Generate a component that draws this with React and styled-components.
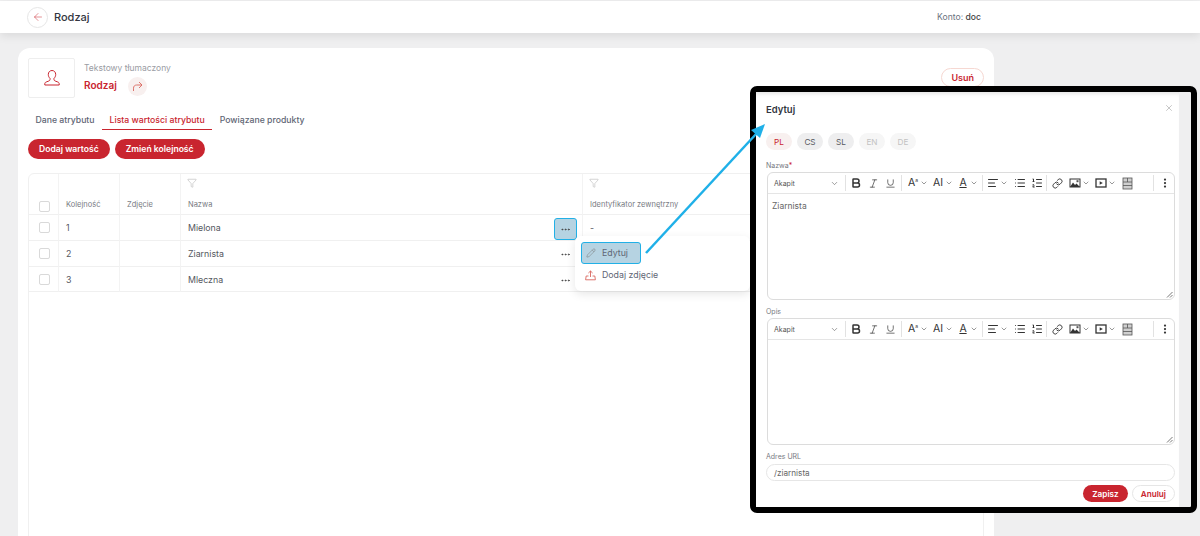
import React from "react";
import styled, { createGlobalStyle } from "styled-components";
import {
  AlignLeft,
  ArrowLeft,
  Bold,
  ChevronDown,
  Filter,
  Italic,
  Link,
  List,
  ListOrdered,
  MoreHorizontal,
  MoreVertical,
  Pencil,
  Underline,
  X,
} from "lucide-react";

const RED = "#c9252f";

const GlobalStyle = createGlobalStyle`
  html, body {
    margin: 0;
    padding: 0;
    background: #efeff0;
    font-family: Inter, "Liberation Sans", sans-serif;
  }
`;

const Page = styled.div`
  position: relative;
  width: 1200px;
  height: 536px;
  overflow: hidden;
  background: #efeff0;
`;

const TopBar = styled.header`
  height: 32px;
  margin-top: 1px;
  padding: 0 219px 0 27px;
  display: flex;
  align-items: center;
  background: #fff;
  box-shadow: 0 3px 10px rgba(0, 0, 0, 0.09);
`;

const BackButton = styled.div`
  width: 19px;
  height: 19px;
  margin-right: 6px;
  display: flex;
  align-items: center;
  justify-content: center;
  border: 1px solid #e6e6e6;
  border-radius: 50%;
  color: ${RED};
`;

const PageTitle = styled.h1`
  flex: 1;
  margin: 0;
  font-size: 11px;
  font-weight: 500;
  color: #33363f;
`;

const Account = styled.div`
  font-size: 8.6px;
  color: #6b7280;

  b {
    font-weight: 500;
    color: #444;
  }
`;

const Card = styled.main`
  width: 956px;
  height: 560px;
  margin: 15px 0 0 18px;
  padding: 10px;
  background: #fff;
  border-radius: 12px;
`;

const CardHead = styled.div`
  display: flex;
  align-items: flex-start;
`;

const Avatar = styled.div`
  width: 45px;
  height: 38px;
  margin-right: 9px;
  display: flex;
  align-items: center;
  justify-content: center;
  border: 1px solid #eee;
  border-radius: 2px;
`;

const HeadText = styled.div`
  flex: 1;
  padding-top: 5px;
`;

const AttrType = styled.div`
  font-size: 8.5px;
  line-height: 11px;
  color: #9a9ca3;
`;

const AttrNameRow = styled.div`
  margin-top: 3px;
  display: flex;
  align-items: center;
`;

const AttrName = styled.div`
  font-size: 10px;
  font-weight: 600;
  margin-top: -3px;
  color: ${RED};
`;

const ShareCircle = styled.div`
  width: 19px;
  height: 19px;
  margin-left: 11px;
  display: flex;
  align-items: center;
  justify-content: center;
  border-radius: 50%;
  background: #f8f0ef;
`;

const OutlineRedButton = styled.button`
  height: 19px;
  margin-top: 10px;
  padding: 0 9px;
  border: 1px solid ${(props) => props.$border};
  border-radius: 10px;
  background: #fff;
  color: ${RED};
  font: 600 9px Inter, "Liberation Sans", sans-serif;
`;

const Tabs = styled.nav`
  margin-top: 12px;
  display: flex;
`;

const Tab = styled.div`
  height: 19px;
  padding: 0 7.5px;
  display: flex;
  align-items: center;
  font-size: 8.7px;
  font-weight: 500;
  color: ${(props) => (props.$active ? RED : "#5f6675")};
  border-bottom: 1px solid ${(props) => (props.$active ? RED : "transparent")};
`;

const Actions = styled.div`
  margin-top: 9px;
  display: flex;
  gap: 5px;
`;

const RedButton = styled.button`
  height: 20px;
  padding: 0 11px;
  border: 0;
  border-radius: 10px;
  background: ${RED};
  color: #fff;
  font: 600 8.6px Inter, "Liberation Sans", sans-serif;
`;

const TableBox = styled.div`
  position: relative;
  height: 420px;
  margin-top: 14px;
  border: 1px solid #f0f0f0;
  border-radius: 6px;
`;

const Grid = styled.div`
  display: grid;
  grid-template-columns: 30px 61px 61px 402px 1fr;
  grid-template-rows: 41px 26px 26px 25px;
`;

const Cell = styled.div`
  position: relative;
  display: flex;
  align-items: center;
  padding-left: 7px;
  border-right: 1px solid #f3f3f3;
  border-bottom: 1px solid #f0f0f0;
  font-size: 8.8px;
  color: #555860;
`;

const HeadCell = styled(Cell)`
  flex-direction: column;
  align-items: flex-start;
  justify-content: flex-end;
  padding-bottom: 5px;
  font-size: 7.5px;
  color: #777a82;
`;

const CheckCell = styled(Cell)`
  padding-left: 10px;
  padding-bottom: ${(props) => (props.$head ? "2px" : "0")};
  align-items: ${(props) => (props.$head ? "flex-end" : "center")};
`;

const Checkbox = styled.div`
  width: 9px;
  height: 9px;
  border: 1px solid #d9d9d9;
  border-radius: 2px;
`;

const FilterSlot = styled.div`
  position: absolute;
  top: 4px;
  left: 6px;
  color: #999;
  line-height: 0;
`;

const RowAction = styled.div`
  position: absolute;
  top: ${(props) => (props.$active ? "3px" : "4px")};
  right: 5px;
  width: ${(props) => (props.$active ? "21px" : "23px")};
  height: ${(props) => (props.$active ? "20px" : "18px")};
  display: flex;
  align-items: center;
  justify-content: center;
  color: #444;
  background: ${(props) => (props.$active ? "#b6d3e2" : "transparent")};
  border: ${(props) => (props.$active ? "1px solid #22b0e6" : "0")};
  border-radius: 3px;
`;

const Menu = styled.div`
  position: absolute;
  top: 62px;
  left: 546px;
  width: 175px;
  height: 55px;
  box-sizing: border-box;
  padding: 6px;
  background: #fff;
  border-radius: 6px;
  box-shadow: 0 3px 10px rgba(0, 0, 0, 0.1);
`;

const MenuItem = styled.div`
  width: 60px;
  height: 22px;
  box-sizing: border-box;
  padding-left: 4px;
  display: flex;
  align-items: center;
  gap: 6px;
  white-space: nowrap;
  font-size: 8.8px;
  line-height: 10px;
  color: #5f6675;
  background: ${(props) => (props.$active ? "#b6d3e2" : "transparent")};
  border: ${(props) => (props.$active ? "1px solid #22b0e6" : "0")};
  border-radius: 3px;

  svg {
    flex-shrink: 0;
  }
`;

const Modal = styled.section`
  position: absolute;
  top: 86px;
  left: 750px;
  width: 435px;
  height: 415px;
  display: flex;
  background: #efeff0;
  border: 6px solid #000;
  border-radius: 7px;
`;

const ModalPanel = styled.div`
  width: 423px;
  box-sizing: border-box;
  padding: 11px 4px 0 10px;
  background: #fff;
  box-shadow: inset 0 5px 5px -4px rgba(0, 0, 0, 0.14);
`;

const ModalHead = styled.div`
  display: flex;
  justify-content: space-between;
  align-items: flex-start;
  color: #777;
`;

const ModalTitle = styled.h2`
  margin: 1px 0 0;
  font-size: 9.5px;
  line-height: 12px;
  font-weight: 600;
  color: #33363f;
`;

const CloseSlot = styled.div`
  margin-right: 1px;
  line-height: 0;
`;

const Langs = styled.div`
  margin-top: 17px;
  display: flex;
  gap: 5px;
`;

const Lang = styled.div`
  width: 26px;
  height: 17px;
  display: flex;
  align-items: center;
  justify-content: center;
  border-radius: 9px;
  font-size: 8.2px;
  background: ${(props) =>
    props.$state === "active" ? "#f8f0ef" : props.$state === "off" ? "#f6f6f6" : "#eeeeef"};
  color: ${(props) =>
    props.$state === "active" ? RED : props.$state === "off" ? "#c2c2c2" : "#555860"};
`;

const FieldLabel = styled.div`
  margin-top: ${(props) => props.$top}px;
  font-size: 7px;
  line-height: 9px;
  color: #777a82;

  i {
    font-style: normal;
    color: ${RED};
  }
`;

const Editor = styled.div`
  position: relative;
  width: 406px;
  height: ${(props) => props.$height}px;
  margin: 2px 0 0 1px;
  border: 1px solid #dcdcdc;
  border-radius: 6px;
`;

const EditorBar = styled.div`
  height: 20px;
  display: flex;
  align-items: center;
  border-bottom: 1px solid #e5e5e5;
  color: #333;
`;

const FormatSelect = styled.div`
  width: 77px;
  padding: 0 6px;
  box-sizing: border-box;
  display: flex;
  align-items: center;
  justify-content: space-between;
  font-size: 7px;
  color: #555;
`;

const BarGroup = styled.div`
  height: 16px;
  width: ${(props) => props.$width}px;
  padding-left: ${(props) => props.$pad}px;
  box-sizing: border-box;
  display: flex;
  align-items: center;
  gap: ${(props) => props.$gap || 0}px;
  border-left: 1px solid #e2e2e2;

  svg {
    flex-shrink: 0;
  }
`;

const ToolDrop = styled.div`
  width: ${(props) => props.$width || "auto"};
  display: flex;
  align-items: center;
  gap: 1px;
  color: #333;
`;

const ToolGlyph = styled.span`
  width: 12px;
  text-align: center;
  font-size: 10.5px;
  line-height: 12px;
  text-decoration: ${(props) => (props.$underline ? "underline" : "none")};
  white-space: nowrap;

  sup {
    font-size: 5px;
    line-height: 0;
  }
`;

const EditorBody = styled.div`
  padding: 7px 4px;
  font-size: 8.5px;
  line-height: 10px;
  color: #666;
`;

const ResizeGrip = styled.svg`
  position: absolute;
  right: 1px;
  bottom: 1px;
`;

const UrlInput = styled.div`
  width: 409px;
  height: 17px;
  margin-top: 3px;
  padding-left: 7px;
  box-sizing: border-box;
  display: flex;
  align-items: center;
  border: 1px solid #e6e6e6;
  border-radius: 9px;
  font-size: 8.2px;
  color: #666;
`;

const ModalFooter = styled.div`
  width: 409px;
  margin-top: 4px;
  display: flex;
  justify-content: flex-end;
  gap: 4px;
`;

const SaveButton = styled(RedButton)`
  height: 17px;
  padding: 0 9px;
  font-size: 8.2px;
`;

const CancelButton = styled.button`
  height: 17px;
  padding: 0 8px;
  border: 1px solid #e6e6e6;
  border-radius: 9px;
  background: #fff;
  color: ${RED};
  font: 600 8.2px Inter, "Liberation Sans", sans-serif;
`;

const Callout = styled.svg`
  position: absolute;
  top: 0;
  left: 0;
  pointer-events: none;
`;

const UserIcon = () => (
  <svg width="18" height="18" viewBox="0 0 18 18" fill="none" stroke={RED} strokeWidth="1">
    <path d="M9 1.5c-2.2 0-3.7 1.7-3.7 4 0 1.6.7 3 1.7 3.8v1.3c0 .7-.5 1.1-1.2 1.4l-2.6 1c-1 .4-1.4 1-1.4 1.9v1.1h14.4v-1.1c0-.9-.4-1.5-1.4-1.9l-2.6-1c-.7-.3-1.2-.7-1.2-1.4V9.3c1-.8 1.7-2.2 1.7-3.8 0-2.3-1.5-4-3.7-4z" />
  </svg>
);

const ShareIcon = () => (
  <svg width="11" height="11" viewBox="0 0 11 11" fill="none" stroke="#d9675f" strokeWidth="0.9">
    <path d="M1.5 10V7.2c0-2 1.3-3.2 3.2-3.2H10M7 1l3 3-3 3" />
  </svg>
);

const UploadTray = () => (
  <svg width="11" height="11" viewBox="0 0 11 11" fill="none" stroke="#d9675f" strokeWidth="0.9">
    <path d="M5.5 7V1M3.4 3l2.1-2 2.1 2M3.5 6H1.2L.6 9.8h9.8L9.8 6H7.5" />
  </svg>
);

const PictureIcon = () => (
  <svg width="12" height="12" viewBox="0 0 12 12">
    <rect x="1" y="2" width="10" height="8" fill="#fff" stroke="#333" strokeWidth="1" />
    <path d="M1 10 4 5.5l2 2.5 1.5-1.5L11 10Z" fill="#333" />
    <rect x="7.5" y="3.2" width="2" height="2" fill="#555" />
  </svg>
);

const VideoIcon = () => (
  <svg width="12" height="12" viewBox="0 0 12 12">
    <rect x="1" y="2" width="10" height="8" fill="none" stroke="#333" strokeWidth="1.3" />
    <path d="M4.7 4.2 7.8 6 4.7 7.800Z" fill="#333" />
  </svg>
);

const TableIcon = () => (
  <svg width="11" height="13" viewBox="0 0 11 13" fill="none" stroke="#555" strokeWidth="0.8">
    <rect x="1" y="1" width="9" height="11" fill="#cfcfcf" />
    <path d="M1 5h9M1 8.500h9M5.500 1v4" />
  </svg>
);

const Chevron = () => <ChevronDown size={8} strokeWidth={1.5} />;

const EditorToolbar = () => (
  <EditorBar>
    <FormatSelect>
      Akapit
      <ChevronDown size={9} strokeWidth={1.5} />
    </FormatSelect>
    <BarGroup $width={56} $pad={4} $gap={6}>
      <Bold size={12} strokeWidth={3} />
      <Italic size={11} strokeWidth={1.5} />
      <Underline size={11} strokeWidth={1.5} />
    </BarGroup>
    <BarGroup $width={81} $pad={5}>
      <ToolDrop $width="26px">
        <ToolGlyph>
          A<sup>a</sup>
        </ToolGlyph>
        <Chevron />
      </ToolDrop>
      <ToolDrop $width="26px">
        <ToolGlyph>AI</ToolGlyph>
        <Chevron />
      </ToolDrop>
      <ToolDrop $width="26px">
        <ToolGlyph $underline>A</ToolGlyph>
        <Chevron />
      </ToolDrop>
    </BarGroup>
    <BarGroup $width={64} $pad={4} $gap={5.5}>
      <ToolDrop>
        <AlignLeft size={12} />
        <Chevron />
      </ToolDrop>
      <List size={12} />
      <ListOrdered size={12} />
    </BarGroup>
    <BarGroup $width={107} $pad={5} $gap={5.5}>
      <Link size={11} />
      <ToolDrop>
        <PictureIcon />
        <Chevron />
      </ToolDrop>
      <ToolDrop>
        <VideoIcon />
        <Chevron />
      </ToolDrop>
      <TableIcon />
    </BarGroup>
    <BarGroup $width={20} $pad={5}>
      <MoreVertical size={12} strokeWidth={2.5} />
    </BarGroup>
  </EditorBar>
);

const Grip = () => (
  <ResizeGrip width="7" height="7" viewBox="0 0 7 7" stroke="#555" strokeWidth="0.8">
    <path d="M1 6.500 6.500 1M4 6.500 6.500 4" />
  </ResizeGrip>
);

const rows = [
  { order: 1, name: "Mielona", ext: "-", active: true },
  { order: 2, name: "Ziarnista" },
  { order: 3, name: "Mleczna" },
];

export default function App() {
  return (
    <Page>
      <GlobalStyle />
      <TopBar>
        <BackButton>
          <ArrowLeft size={12} strokeWidth={1} />
        </BackButton>
        <PageTitle>Rodzaj</PageTitle>
        <Account>
          Konto: <b>doc</b>
        </Account>
      </TopBar>

      <Card>
        <CardHead>
          <Avatar>
            <UserIcon />
          </Avatar>
          <HeadText>
            <AttrType>Tekstowy tłumaczony</AttrType>
            <AttrNameRow>
              <AttrName>Rodzaj</AttrName>
              <ShareCircle>
                <ShareIcon />
              </ShareCircle>
            </AttrNameRow>
          </HeadText>
          <OutlineRedButton $border="#f6d8d2">Usuń</OutlineRedButton>
        </CardHead>

        <Tabs>
          <Tab>Dane atrybutu</Tab>
          <Tab $active>Lista wartości atrybutu</Tab>
          <Tab>Powiązane produkty</Tab>
        </Tabs>

        <Actions>
          <RedButton>Dodaj wartość</RedButton>
          <RedButton>Zmień kolejność</RedButton>
        </Actions>

        <TableBox>
          <Grid>
            <CheckCell $head>
              <Checkbox />
            </CheckCell>
            <HeadCell>Kolejność</HeadCell>
            <HeadCell>Zdjęcie</HeadCell>
            <HeadCell>
              <FilterSlot>
                <Filter size={10} strokeWidth={1} />
              </FilterSlot>
              Nazwa
            </HeadCell>
            <HeadCell>
              <FilterSlot>
                <Filter size={10} strokeWidth={1} />
              </FilterSlot>
              Identyfikator zewnętrzny
            </HeadCell>
            {rows.map((row) => (
              <React.Fragment key={row.order}>
                <CheckCell>
                  <Checkbox />
                </CheckCell>
                <Cell>{row.order}</Cell>
                <Cell />
                <Cell>
                  {row.name}
                  <RowAction $active={row.active}>
                    <MoreHorizontal size={11} />
                  </RowAction>
                </Cell>
                <Cell>{row.ext}</Cell>
              </React.Fragment>
            ))}
          </Grid>

          <Menu>
            <MenuItem $active>
              <Pencil size={10} strokeWidth={1.2} color="#777" />
              Edytuj
            </MenuItem>
            <MenuItem>
              <UploadTray />
              Dodaj zdjęcie
            </MenuItem>
          </Menu>
        </TableBox>
      </Card>

      <Modal>
        <ModalPanel>
          <ModalHead>
            <ModalTitle>Edytuj</ModalTitle>
            <CloseSlot>
              <X size={10} strokeWidth={1} />
            </CloseSlot>
          </ModalHead>
          <Langs>
            <Lang $state="active">PL</Lang>
            <Lang>CS</Lang>
            <Lang>SL</Lang>
            <Lang $state="off">EN</Lang>
            <Lang $state="off">DE</Lang>
          </Langs>

          <FieldLabel $top={11}>
            Nazwa<i>*</i>
          </FieldLabel>
          <Editor $height={126}>
            <EditorToolbar />
            <EditorBody>Ziarnista</EditorBody>
            <Grip />
          </Editor>

          <FieldLabel $top={7}>Opis</FieldLabel>
          <Editor $height={125}>
            <EditorToolbar />
            <Grip />
          </Editor>

          <FieldLabel $top={7}>Adres URL</FieldLabel>
          <UrlInput>/ziarnista</UrlInput>

          <ModalFooter>
            <SaveButton>Zapisz</SaveButton>
            <CancelButton>Anuluj</CancelButton>
          </ModalFooter>
        </ModalPanel>
      </Modal>

      <Callout width="1200" height="536" viewBox="0 0 1200 536">
        <path d="M646 253 757 133" stroke="#1fb0e8" strokeWidth="2.5" fill="none" />
        <path d="M765 124 760 138 751 130Z" fill="#1fb0e8" />
      </Callout>
    </Page>
  );
}
